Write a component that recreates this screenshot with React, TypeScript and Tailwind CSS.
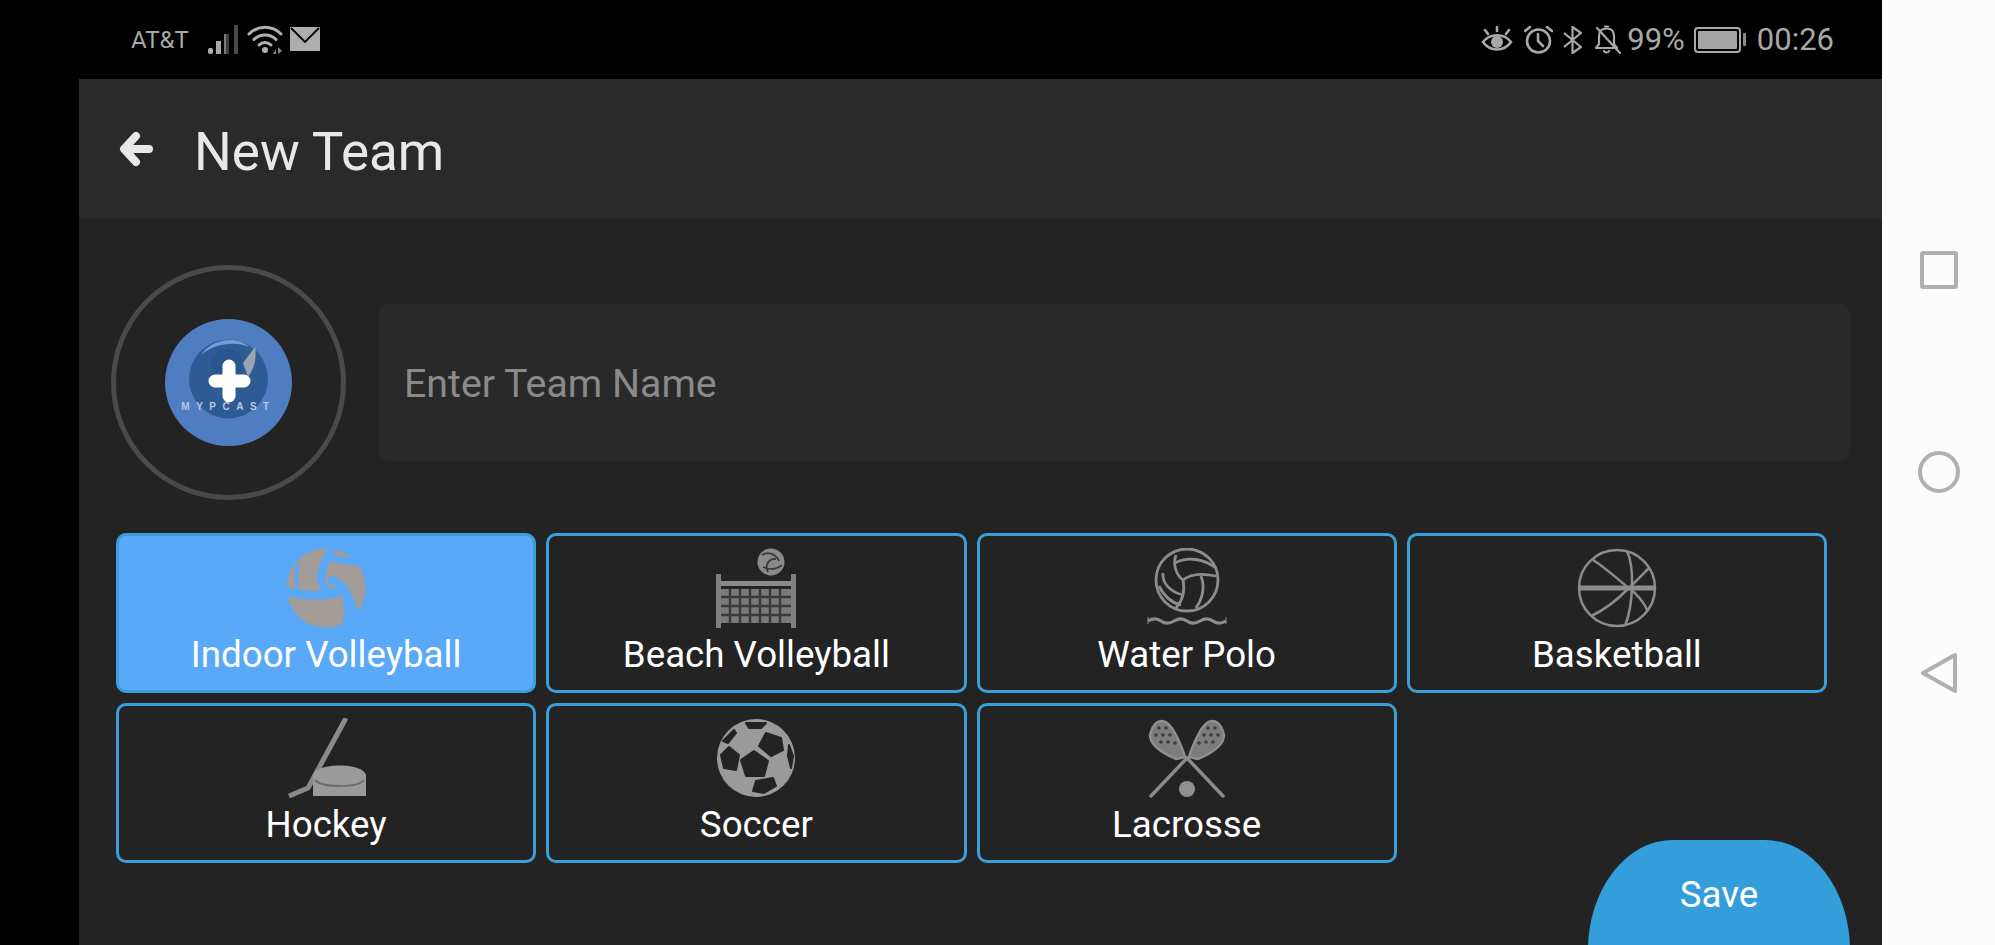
import type { ReactNode } from 'react'

const Signal = () => (
  <svg width="31" height="30" viewBox="0 0 31 30">
    <rect x="0" y="23" width="5" height="6" rx="2" fill="#b0b0b0" />
    <rect x="8" y="16" width="5" height="13" fill="#a8a8a8" />
    <rect x="16" y="9" width="5" height="20" fill="#7a7a7a" />
    <rect x="26" y="0" width="4" height="29" fill="#4a4a4a" />
    <rect x="18" y="9" width="3" height="20" fill="#3f3f3f" />
  </svg>
)

const Wifi = () => (
  <svg width="36" height="30" viewBox="0 0 36 30" fill="none" stroke="#b0b0b0" strokeWidth="3" strokeLinecap="round">
    <path d="M2 9C11 0 25 0 34 9" />
    <path d="M7 14.5C13 8.5 23 8.5 29 14.5" />
    <path d="M12 20C15.5 16.5 20.500 16.500 24 20" />
    <circle cx="18" cy="25" r="3" fill="#b0b0b0" stroke="none" />
    <path d="M26 29l3-5v5zM31 22v7l4-3z" fill="#8a8a8a" stroke="none" />
  </svg>
)

const Mail = () => (
  <svg width="30" height="25" viewBox="0 0 30 25">
    <rect x="0" y="0" width="30" height="24" fill="#adadad" />
    <path d="M1 1L15 15L29 1" fill="none" stroke="#000" strokeWidth="1.800" />
  </svg>
)

const Eye = () => (
  <svg width="32" height="28" viewBox="0 0 32 28" fill="none" stroke="#a8a8a8" strokeWidth="2.600" strokeLinecap="round">
    <path d="M2 16C9 7 23 7 30 16C23 26 9 26 2 16Z" />
    <circle cx="16" cy="16" r="6" fill="#a8a8a8" stroke="none" />
    <path d="M16 1v4M4 4l3 4M28 4l-3 4" />
  </svg>
)

const Alarm = () => (
  <svg width="29" height="28" viewBox="0 0 29 28" fill="none" stroke="#a8a8a8" strokeWidth="2.600" strokeLinecap="round">
    <circle cx="14.500" cy="15" r="11.500" />
    <path d="M14 8v7l5 5M1 5l5-4M28 5l-5-4" />
  </svg>
)

const Bluetooth = () => (
  <svg width="20" height="28" viewBox="0 0 20 28" fill="none" stroke="#a8a8a8" strokeWidth="2.200" strokeLinejoin="round">
    <path d="M1 7L18 21L9.500 27V1L18 7L1 21" />
  </svg>
)

const BellOff = () => (
  <svg width="27" height="30" viewBox="0 0 27 30" fill="none" stroke="#a8a8a8" strokeWidth="2.200" strokeLinecap="round" strokeLinejoin="round">
    <path d="M5 11C5 6 8 3.500 12.500 3.500C17 3.500 20 6 20 11V19L23 23H2L5 19Z" />
    <path d="M11 1.500h3M10 26c1 2 4 2 5 0M3 3L26 28" />
  </svg>
)

const Battery = () => (
  <div className="flex items-center gap-[2px]">
    <div className="h-[26px] w-[47px] rounded-[4px] border-2 border-[#a8a8a8] p-[2px]">
      <div className="h-full w-full rounded-[1px] bg-[#a4a4a4]" />
    </div>
    <div className="h-[13px] w-[3px] rounded-[1px] bg-[#8c8c8c]" />
  </div>
)

const BackArrow = () => (
  <svg width="34" height="36" viewBox="0 0 34 36" fill="none" stroke="#e8e8e8" strokeWidth="8" strokeLinecap="round" strokeLinejoin="round">
    <path d="M30 18H6M17 5L5 18L17 31" />
  </svg>
)

const LogoPlus = () => (
  <div className="relative flex h-[127px] w-[127px] items-center justify-center rounded-full bg-[#4f7dc2]">
    <svg width="127" height="127" viewBox="0 0 127 127" className="absolute inset-0">
      <circle cx="63.500" cy="60" r="39.500" fill="#2f5b95" />
      <path d="M36 36C46 20 72 16 84 28C70 22 50 24 36 36Z" fill="#6f9fd8" />
      <circle cx="62" cy="46" r="16" fill="#28578f" />
      <path d="M78 44L90 28C92 40 89 50 83 58Z" fill="#9aa4b2" />
      <path d="M64 47V77M50 62H79" stroke="#fff" strokeWidth="13" strokeLinecap="round" />
    </svg>
    <span className="absolute top-[82px] left-0 w-[127px] text-center font-['Liberation_Sans',sans-serif] text-[10px] leading-[12px] font-bold tracking-[6.500px] text-[#b7c8e0]">
      MYPCAST
    </span>
  </div>
)

const Indoor = () => (
  <svg width="80" height="80" viewBox="0 0 80 80" fill="none">
    <circle cx="40" cy="40" r="39.500" fill="#a39c98" />
    <g stroke="#59a9f8" strokeLinecap="round">
      <path d="M45 2C40 12 34 22 35 32C36 38 40 42 46 46" strokeWidth="8" />
      <path d="M0 43C14 47 34 49 52 44" strokeWidth="9" />
      <path d="M12 17C10 24 10 32 11 38" strokeWidth="3.500" />
      <path d="M46 10C56 13 66 13 76 15" strokeWidth="7" />
      <path d="M46 32C56 36 64 46 68 66" strokeWidth="8" />
      <path d="M60 72C62 66 62 60 60 52" strokeWidth="7" />
    </g>
  </svg>
)

const Beach = () => (
  <svg width="80" height="80" viewBox="0 0 80 80" fill="none">
    <circle cx="55" cy="14" r="13.500" fill="#8a8a8a" />
    <path d="M46 7C52 3 60 6 63 13M52 24C48 16 54 10 60 11M47 19C54 22 60 22 66 17" stroke="#3a3a3a" strokeWidth="1.800" />
    <rect x="0" y="26" width="5" height="54" fill="#808080" />
    <rect x="75" y="26" width="5" height="54" fill="#808080" />
    <rect x="5" y="33" width="70" height="5" fill="#8a8a8a" />
    <rect x="5" y="41" width="70" height="34" fill="#7a7a7a" />
    <path d="M14 41V75M24 41V75M34 41V75M44 41V75M54 41V75M64 41V75M5 49H75M5 58H75M5 67H75" stroke="#3a3a3a" strokeWidth="2.500" />
  </svg>
)

const WaterPolo = () => (
  <svg width="80" height="80" viewBox="0 0 80 80" fill="none" stroke="#8c8c8c" strokeWidth="2.800">
    <g transform="translate(-1 0)">
      <circle cx="41" cy="32" r="31" />
      <path d="M30 7C27 15 29 26 37 32C44 26 56 25 70 28" />
      <path d="M29 15C42 8 58 11 70 20" />
      <path d="M17 25C16 35 24 44 37 47" />
      <path d="M37 32C39 42 37 52 30 60" />
      <path d="M55 28C59 38 57 50 50 60" />
      <path d="M13 38C18 48 26 55 35 57" />
    </g>
    <path d="M1 73C6 70 10 70 14 73C18 76 22 76 27 73C32 70 36 70 40 73C44 76 48 76 53 73C58 70 62 70 66 73C70 76 74 76 79 73" strokeWidth="3.200" />
    <path d="M1 69V76M79 69V76" strokeWidth="1" />
  </svg>
)

const Basket = () => (
  <svg width="80" height="80" viewBox="0 0 80 80" fill="none" stroke="#8c8c8c" strokeWidth="2.500">
    <circle cx="40" cy="40" r="38" />
    <path d="M2 40H78" strokeWidth="5" />
    <path d="M50 3C58 20 56 58 48 78" />
    <path d="M16 12C32 22 48 38 52 40C60 46 68 56 70 62" />
    <path d="M14 68C28 62 42 50 52 40C58 34 68 24 72 20" />
  </svg>
)

const Hockey = () => (
  <svg width="80" height="80" viewBox="0 0 80 80" fill="none">
    <path d="M60 0L22 70L3 78" stroke="#8a8a8a" strokeWidth="5" strokeLinejoin="round" />
    <path d="M27 78V58C27 44 80 44 80 58V78Z" fill="#9a9a9a" />
    <path d="M29 62C36 70 72 70 78 62" stroke="#6c6c6c" strokeWidth="2" />
  </svg>
)

const Soccer = () => (
  <svg width="80" height="80" viewBox="0 0 80 80">
    <circle cx="40" cy="40" r="39" fill="#9a9a9a" />
    <g fill="#232323" stroke="#232323" strokeWidth="2" strokeLinejoin="round">
      <path d="M38 33L52 43L48 58L30 58L25 42Z" />
      <path d="M50 15L65 20L67 32L55 38L43 28Z" />
      <path d="M13 29L23 37L20 52L8 50L5 37Z" />
      <path d="M40 63L57 60L60 68L48 75L37 73Z" />
      <path d="M30 5L50 5L45 10L33 10Z" />
      <path d="M7 23L18 12L20 15L12 25Z" />
      <path d="M73 27L77 38L75 50L72 38Z" />
    </g>
  </svg>
)

const Lacrosse = () => (
  <svg width="80" height="80" viewBox="0 0 80 80" fill="none">
    <path d="M4 78L40 40L76 78" stroke="#8a8a8a" strokeWidth="3.500" strokeLinecap="round" />
    <g fill="#7c7c7c" stroke="#8f8f8f" strokeWidth="2.500" strokeLinejoin="round">
      <path d="M3 17C5 9 9 3 15 3C21 3 25 9 29 17C33 25 36 32 38 39L29 41C22 38 3 30 3 17Z" />
      <path d="M77 17C75 9 71 3 65 3C59 3 55 9 51 17C47 25 44 32 42 39L51 41C58 38 77 30 77 17Z" />
    </g>
    <g fill="#3c3c3c">
      <circle cx="12" cy="10" r="1.800" />
      <circle cx="19" cy="10" r="1.800" />
      <circle cx="9" cy="17" r="1.800" />
      <circle cx="16" cy="17" r="1.800" />
      <circle cx="23" cy="17" r="1.800" />
      <circle cx="14" cy="24" r="1.800" />
      <circle cx="21" cy="24" r="1.800" />
      <circle cx="28" cy="25" r="1.800" />
      <circle cx="68" cy="10" r="1.800" />
      <circle cx="61" cy="10" r="1.800" />
      <circle cx="71" cy="17" r="1.800" />
      <circle cx="64" cy="17" r="1.800" />
      <circle cx="57" cy="17" r="1.800" />
      <circle cx="66" cy="24" r="1.800" />
      <circle cx="59" cy="24" r="1.800" />
      <circle cx="52" cy="25" r="1.800" />
    </g>
    <circle cx="40" cy="71" r="8" fill="#8f8f8f" />
  </svg>
)

type Sport = { name: string; icon: ReactNode; selected?: boolean }

const sports: Sport[] = [
  { name: 'Indoor Volleyball', icon: <Indoor />, selected: true },
  { name: 'Beach Volleyball', icon: <Beach /> },
  { name: 'Water Polo', icon: <WaterPolo /> },
  { name: 'Basketball', icon: <Basket /> },
  { name: 'Hockey', icon: <Hockey /> },
  { name: 'Soccer', icon: <Soccer /> },
  { name: 'Lacrosse', icon: <Lacrosse /> },
]

export default function App() {
  return (
    <div className="flex h-[945px] w-[1995px] overflow-hidden bg-black font-['Roboto',sans-serif]">
      <div className="w-[79px] shrink-0 bg-black" />
      <div className="flex w-[1803px] shrink-0 flex-col">
        <div className="flex h-[79px] shrink-0 items-center justify-between bg-black pr-[48px] pl-[52px] text-[#a8a8a8]">
          <div className="flex items-center">
            <span className="mr-[19px] text-[24px] leading-none">AT&amp;T</span>
            <Signal />
            <span className="ml-[8px]"><Wifi /></span>
            <span className="ml-[7px]"><Mail /></span>
          </div>
          <div className="flex items-center">
            <Eye />
            <span className="ml-[11px]"><Alarm /></span>
            <span className="ml-[10px]"><Bluetooth /></span>
            <span className="ml-[11px]"><BellOff /></span>
            <span className="ml-[6px] text-[31px] leading-none">99%</span>
            <span className="ml-[9px]"><Battery /></span>
            <span className="ml-[11px] text-[31px] leading-none">00:26</span>
          </div>
        </div>
        <div className="flex h-[140px] shrink-0 items-center bg-[#2a2a2a] pl-[40px]">
          <BackArrow />
          <span className="ml-[41px] pt-[7px] text-[53px] leading-none text-[#e8e8e8]">New Team</span>
        </div>
        <div className="min-h-0 flex-1 overflow-hidden bg-[#232323] pt-[46px]">
          <div className="flex items-center gap-[32px] pr-[32px] pl-[32px]">
            <div className="flex h-[235px] w-[235px] shrink-0 items-center justify-center rounded-full border-[5px] border-[#4a4a4a]">
              <LogoPlus />
            </div>
            <div className="flex h-[157px] flex-1 items-center rounded-[10px] bg-[#292929] pt-[4px] pl-[26px] text-[39.300px] text-[#8a8a8a]">
              Enter Team Name
            </div>
          </div>
          <div className="mt-[33px] ml-[37px] grid w-[1711px] grid-cols-4 gap-x-[10px] gap-y-[10px]">
            {sports.map((sport) => (
              <div
                key={sport.name}
                className={`flex h-[160px] flex-col items-center rounded-[10px] border-[3px] border-[#3a9fd8] pt-[12px] ${
                  sport.selected ? 'bg-[#59a9f8]' : 'bg-[#232323]'
                }`}
              >
                {sport.icon}
                <span className="mt-[5px] text-[36.700px] leading-[44px] text-white">{sport.name}</span>
              </div>
            ))}
          </div>
          <div className="mt-[-23px] flex justify-end pr-[32px]">
            <button className="h-[115px] w-[262px] rounded-[85px_85px_0_0/110px_110px_0_0] bg-[#339ed9] pb-[6px] text-[36.700px] text-white">
              Save
            </button>
          </div>
        </div>
      </div>
      <div className="flex flex-1 flex-col items-center bg-[#fcfcfc] pt-[251px]">
        <div className="h-[38px] w-[38px] rounded-[3px] border-4 border-[#b0b0b0]" />
        <div className="mt-[162px] h-[42px] w-[42px] rounded-full border-4 border-[#b0b0b0]" />
        <svg className="mt-[159px]" width="38" height="42" viewBox="0 0 38 42" fill="none">
          <path d="M35 3L3 21L35 39Z" stroke="#b0b0b0" strokeWidth="4" strokeLinejoin="round" />
        </svg>
      </div>
    </div>
  )
}
